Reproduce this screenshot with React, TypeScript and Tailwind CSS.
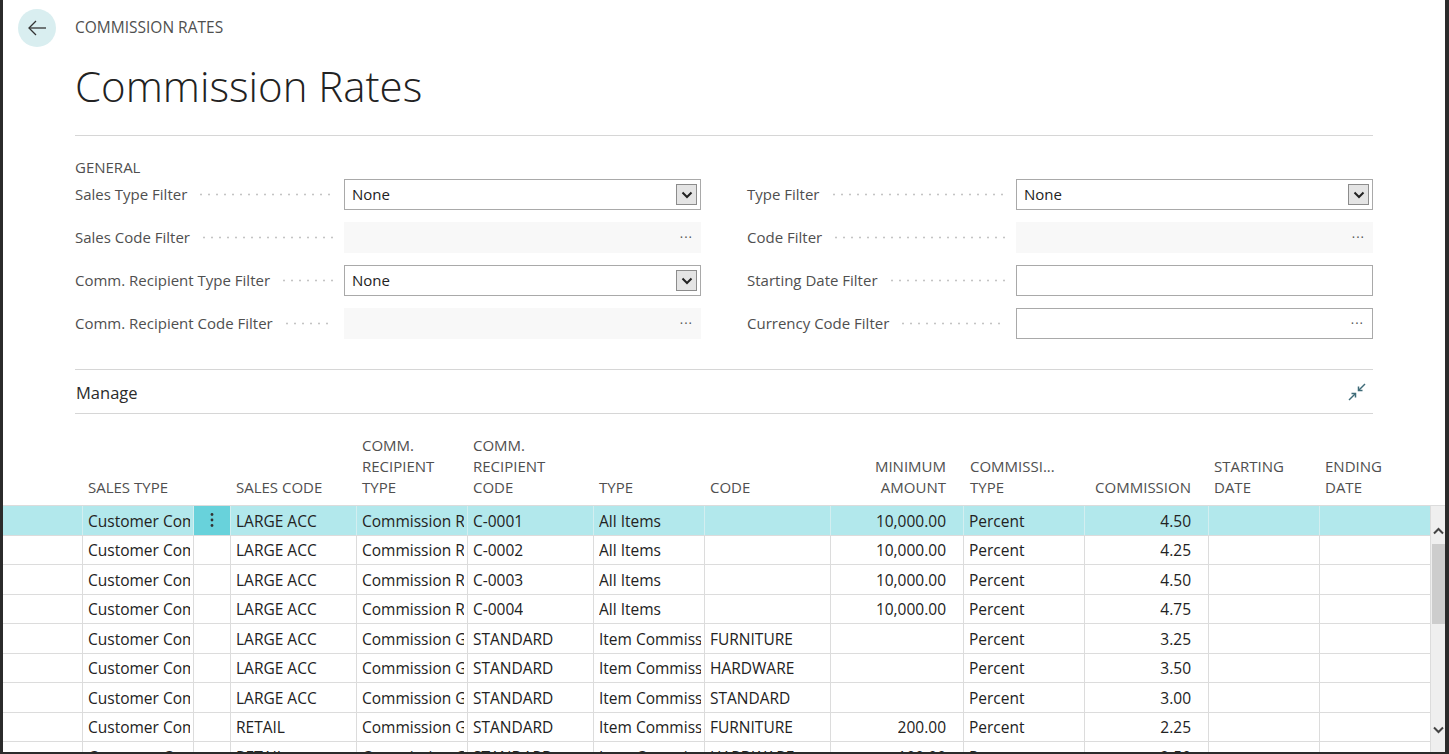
import React from "react";

type Col = { w: string; head: string[]; right?: boolean };

const columns: Col[] = [
  { w: "w-[111px]", head: ["SALES TYPE"] },
  { w: "w-[37px]", head: [] },
  { w: "w-[126px]", head: ["SALES CODE"] },
  { w: "w-[111px]", head: ["COMM.", "RECIPIENT", "TYPE"] },
  { w: "w-[126px]", head: ["COMM.", "RECIPIENT", "CODE"] },
  { w: "w-[111px]", head: ["TYPE"] },
  { w: "w-[126px]", head: ["CODE"] },
  { w: "w-[133px]", head: ["MINIMUM", "AMOUNT"], right: true },
  { w: "w-[121px]", head: ["COMMISSI...", "TYPE"] },
  { w: "w-[124px]", head: ["COMMISSION"], right: true },
  { w: "w-[111px]", head: ["STARTING", "DATE"] },
  { w: "w-[111px]", head: ["ENDING", "DATE"] },
];

const rows: string[][] = [
  ["Customer Commission Group", "", "LARGE ACC", "Commission Recipient", "C-0001", "All Items", "", "10,000.00", "Percent", "4.50", "", ""],
  ["Customer Commission Group", "", "LARGE ACC", "Commission Recipient", "C-0002", "All Items", "", "10,000.00", "Percent", "4.25", "", ""],
  ["Customer Commission Group", "", "LARGE ACC", "Commission Recipient", "C-0003", "All Items", "", "10,000.00", "Percent", "4.50", "", ""],
  ["Customer Commission Group", "", "LARGE ACC", "Commission Recipient", "C-0004", "All Items", "", "10,000.00", "Percent", "4.75", "", ""],
  ["Customer Commission Group", "", "LARGE ACC", "Commission Group", "STANDARD", "Item Commission Group", "FURNITURE", "", "Percent", "3.25", "", ""],
  ["Customer Commission Group", "", "LARGE ACC", "Commission Group", "STANDARD", "Item Commission Group", "HARDWARE", "", "Percent", "3.50", "", ""],
  ["Customer Commission Group", "", "LARGE ACC", "Commission Group", "STANDARD", "Item Commission Group", "STANDARD", "", "Percent", "3.00", "", ""],
  ["Customer Commission Group", "", "RETAIL", "Commission Group", "STANDARD", "Item Commission Group", "FURNITURE", "200.00", "Percent", "2.25", "", ""],
  ["Customer Commission Group", "", "RETAIL", "Commission Group", "STANDARD", "Item Commission Group", "HARDWARE", "100.00", "Percent", "2.50", "", ""],
];

type Kind = "select" | "locked" | "input" | "lookup";

const filters: { label: string; kind: Kind }[] = [
  { label: "Sales Type Filter", kind: "select" },
  { label: "Type Filter", kind: "select" },
  { label: "Sales Code Filter", kind: "locked" },
  { label: "Code Filter", kind: "locked" },
  { label: "Comm. Recipient Type Filter", kind: "select" },
  { label: "Starting Date Filter", kind: "input" },
  { label: "Comm. Recipient Code Filter", kind: "locked" },
  { label: "Currency Code Filter", kind: "lookup" },
];

const Field = ({ label, kind }: { label: string; kind: Kind }) => {
  let box;
  if (kind === "select") {
    box = (
      <div className="flex-1 h-full border border-[#a9a9a9] bg-white flex items-center pl-[7px] pr-[3px]">
        <span className="flex-1 text-[15px] text-[#222]">None</span>
        <div className="w-[21px] h-[21px] border border-[#8c8c8c] bg-[#e4e4e4] flex items-center justify-center">
          <svg width="12" height="8" viewBox="0 0 12 8">
            <polyline points="1.5,1.5 6,6 10.5,1.5" fill="none" stroke="#222" strokeWidth="2" />
          </svg>
        </div>
      </div>
    );
  } else if (kind === "locked") {
    box = (
      <div className="flex-1 h-full bg-[#f8f8f8] flex items-center justify-end pr-[8px]">
        <span className="text-[13px] text-[#555] tracking-[1px]">···</span>
      </div>
    );
  } else {
    box = (
      <div className="flex-1 h-full border border-[#a9a9a9] bg-white flex items-center justify-end pr-[8px]">
        {kind === "lookup" && <span className="text-[13px] text-[#555] tracking-[1px]">···</span>}
      </div>
    );
  }
  return (
    <div className="flex h-[31px] items-center">
      <div className="w-[258px] shrink-0 flex items-center mr-[11px]">
        <span className="text-[15px] text-[#4f4f4f] whitespace-nowrap">{label}</span>
        <span className="flex-1 ml-[10px] h-[3px] bg-[radial-gradient(circle,#c4c4c4_0.9px,transparent_1.2px)] bg-[length:8px_3px] bg-repeat-x" />
      </div>
      {box}
    </div>
  );
};

const App = () => {
  return (
    <div className="w-[1449px] h-[754px] bg-[#2b2b2b] pl-[3px] pr-[4px] pb-[2px] font-['Open_Sans',sans-serif]">
      <div className="h-full bg-white flex flex-col overflow-hidden">
        {/* breadcrumb */}
        <div className="h-[56px] shrink-0 flex items-center">
          <div className="ml-[15px] w-[38px] h-[38px] rounded-full bg-[#d9eef0] flex items-center justify-center">
            <svg width="20" height="16" viewBox="0 0 20 16">
              <line x1="2" y1="8" x2="19" y2="8" stroke="#333" strokeWidth="1.3" />
              <polyline points="9,1 2,8 9,15" fill="none" stroke="#333" strokeWidth="1.3" />
            </svg>
          </div>
          <div className="ml-[19px] text-[15.5px] text-[#4f4f4f]">COMMISSION RATES</div>
        </div>

        <div className="h-[60px] shrink-0 pl-[72px] flex items-center text-[42px] font-light text-[#222] leading-none">
          Commission Rates
        </div>

        <div className="mt-[19px] ml-[72px] w-[1298px] h-px bg-[#d6d6d6] shrink-0" />

        <div className="mt-[21px] ml-[72px] h-[20px] leading-[20px] text-[15px] text-[#4f4f4f] shrink-0">GENERAL</div>

        <div className="mt-[2px] ml-[72px] w-[1298px] grid grid-cols-2 gap-x-[46px] gap-y-[12px] shrink-0">
          {filters.map((f) => (
            <Field key={f.label} label={f.label} kind={f.kind} />
          ))}
        </div>

        <div className="mt-[30px] ml-[72px] w-[1298px] h-px bg-[#d6d6d6] shrink-0" />
        <div className="ml-[72px] w-[1298px] h-[43px] shrink-0 flex items-center justify-between pt-[3px]">
          <span className="pl-[1px] text-[16.5px] text-[#2b2b2b]">Manage</span>
          <svg className="mr-[6px] mb-[3px]" width="20" height="20" viewBox="0 0 20 20">
            <g fill="none" stroke="#3f6b78" strokeWidth="1.5">
              <line x1="2" y1="18" x2="8.5" y2="11.5" />
              <polyline points="4.5,11.5 8.5,11.5 8.5,15.5" />
              <line x1="18" y1="2" x2="11.5" y2="8.5" />
              <polyline points="11.5,4.5 11.5,8.5 15.5,8.5" />
            </g>
          </svg>
        </div>
        <div className="ml-[72px] w-[1298px] h-px bg-[#d6d6d6] shrink-0" />

        {/* column headers */}
        <div className="h-[91px] shrink-0 flex items-end pb-[7px]">
          <div className="w-[79px] shrink-0" />
          {columns.map((c, i) => (
            <div
              key={i}
              className={`${c.w} shrink-0 flex flex-col text-[15px] leading-[21px] text-[#4f4f4f] whitespace-nowrap overflow-hidden ${
                c.right ? "items-end pr-[17px]" : "pl-[6px]"
              } ${i === 8 ? "pl-[7px]" : ""}`}
            >
              {c.head.map((h) => (
                <span key={h}>{h}</span>
              ))}
            </div>
          ))}
        </div>

        {/* rows */}
        <div className="flex-1 flex border-t border-[#dcdcdc] min-h-0">
          <div className="w-[1427px] shrink-0 flex flex-col">
            {rows.map((r, ri) => {
              const sel = ri === 0;
              return (
                <div
                  key={ri}
                  className={`flex h-[29.5px] shrink-0 border-b border-[#dcdcdc] ${sel ? "bg-[#b2e8ec]" : "bg-white"}`}
                >
                  <div className="w-[79px] shrink-0" />
                  {columns.map((c, ci) => (
                    <div
                      key={ci}
                      className={`${c.w} shrink-0 border-l ${sel ? "border-[#d3eef0]" : "border-[#dcdcdc]"} flex items-center overflow-hidden whitespace-nowrap text-[15.5px] text-[#222] ${
                        ci === 1
                          ? sel
                            ? "bg-[#68d2db] justify-center"
                            : "justify-center"
                          : c.right
                          ? "justify-end pr-[17px] pt-[2px]"
                          : "pl-[5px] pr-[3px] pt-[2px]"
                      }`}
                    >
                      {ci === 1 && sel ? (
                        <svg width="4" height="16" viewBox="0 0 4 16">
                          <circle cx="2" cy="2.5" r="1.4" fill="#333" />
                          <circle cx="2" cy="8" r="1.4" fill="#333" />
                          <circle cx="2" cy="13.5" r="1.4" fill="#333" />
                        </svg>
                      ) : (
                        <span className="block min-w-0 overflow-hidden whitespace-nowrap">{r[ci]}</span>
                      )}
                    </div>
                  ))}
                </div>
              );
            })}
          </div>
          {/* scrollbar */}
          <div className="w-[15px] shrink-0 border-l border-[#dcdcdc] bg-[#efefef] flex flex-col items-center pt-[21px] pb-[18px]">
            <svg width="11" height="8" viewBox="0 0 11 8">
              <polyline points="1,6.5 5.5,2 10,6.5" fill="none" stroke="#444" strokeWidth="2" />
            </svg>
            <div className="mt-[9px] ml-[1px] w-[13px] h-[80px] bg-[#cdcdcd]" />
            <div className="flex-1" />
            <svg width="11" height="8" viewBox="0 0 11 8">
              <polyline points="1,1.5 5.5,6 10,1.5" fill="none" stroke="#444" strokeWidth="2" />
            </svg>
          </div>
        </div>
      </div>
    </div>
  );
};

export default App;
